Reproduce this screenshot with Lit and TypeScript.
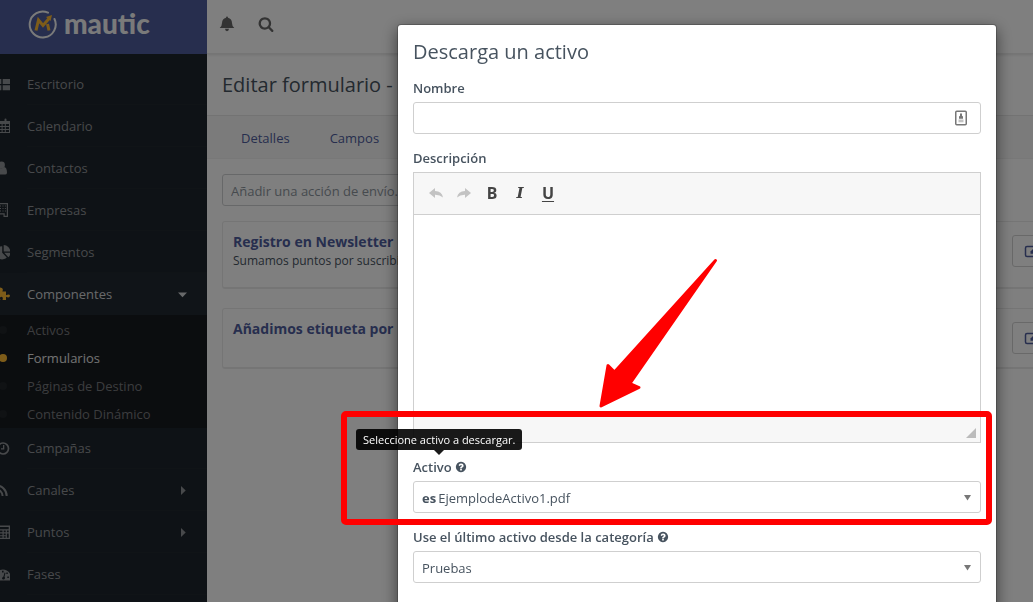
import { LitElement, html, css, svg, nothing } from "lit";
import { customElement } from "lit/decorators.js";
import { classMap } from "lit/directives/class-map.js";

const icons: Record<string, unknown> = {
  grid: svg`<path d="M1 3h6.300v5H1zM8.700 3H16v5H8.700zM1 9.300h6.300v5H1zM8.700 9.300H16v5H8.700z"/>`,
  calendar: svg`<path fill-rule="evenodd" d="M1 3h2.500V1.500q0-1 1-1t1 1V3h5V1.500q0-1 1-1t1 1V3H16v12H1zM2 6v2h2.400V6zm3.400 0v2h2.200V6zm3.200 0v2h2.200V6zm3.200 0v2H15V6zM2 9v2h2.400V9zm3.400 0v2h2.200V9zm3.200 0v2h2.200V9zm3.200 0v2H15V9zM2 12v2h2.400v-2zm3.400 0v2h2.200v-2zm3.200 0v2h2.200v-2zm3.200 0v2H15v-2z"/>`,
  user: svg`<circle cx="7.500" cy="5" r="3.400"/><path d="M1 13q0-6 3.500-6Q7.500 9.500 10 7 13 7 13 13q-.3 1.500-2 1.500H3Q1.300 14.500 1 13z"/>`,
  building: svg`<path fill-rule="evenodd" d="M1 1h13v14H9.500v-2.500h-4V15H1zm1.200 1.200v11.600h2.100v-2.500h6.400v2.500h2.100V2.200z"/><path d="M3.500 3.500h1v1h-1zm2.500 0h1v1H6zm2.500 0h1v1h-1zm2.400 0h1v1h-1zM3.500 6h1v1h-1zM6 6h1v1H6zm2.500 0h1v1h-1zm2.400 0h1v1h-1zM3.500 8.500h1v1h-1zm2.500 0h1v1H6zm2.500 0h1v1h-1zm2.400 0h1v1h-1z"/>`,
  pie: svg`<path d="M8.200 2.200v6.600l4.600 4.600A6.600 6.600 0 1 1 8.200 2.200z"/><path d="M9.700 1a6.500 6.500 0 0 1 6.500 6.500H9.700zM10.200 8.800h6.200a6.500 6.500 0 0 1-2 4.500z"/>`,
  puzzle: svg`<path d="M1 6h4.500Q4 2 6.500 1.500 10 2 8.300 5.500H12v3.800q3.500-2 4 .5-.5 2.700-4 1V14H8.500q1-3-1-3.200Q5 11 6.500 14H1z"/>`,
  clock: svg`<circle cx="9" cy="8.500" r="5.500" fill="none" stroke="currentColor" stroke-width="1.700"/><path d="M9 5h1.300v4.500H7V8.300h2z"/>`,
  rss: svg`<circle cx="4" cy="12.500" r="1.800"/><path fill="none" stroke="currentColor" stroke-width="2" d="M2 3.500A10.500 10.500 0 0 1 12.700 14M2 7.500A6.500 6.500 0 0 1 8.600 14"/>`,
  calculator: svg`<path fill-rule="evenodd" d="M1 1.500h15v13.500H1zM2.300 3v2.200h12.400V3zm0 3.500v1.800h2.500V6.500zm3.700 0v1.800h2.500V6.500zm3.700 0v1.800h2V6.500zm3.200 0v1.800h1.800V6.500zM2.300 9.500v1.700h2.500V9.500zm3.700 0v1.700h2.500V9.500zm3.700 0v1.700h2V9.500zm3.200 0v4.200h1.800V9.500zM2.300 12.300v1.500h2.500v-1.500zm3.700 0v1.500h2.500v-1.500zm3.700 0v1.500h2v-1.500z"/>`,
  gauge: svg`<path fill-rule="evenodd" d="M1.500 14.500a8 8 0 1 1 14.800 0zM8 12.800a1.700 1.700 0 0 0 2.900-.3q.3-1-.4-1.700l1-3.900-1-.3-1 3.900q-1.300.3-1.500 2.300zM8 4.800v1.600h1.600V4.800zM4.500 6.500V8H6V6.500zm-1.400 4v1.600h1.600v-1.600zM12.300 6.500V8h1.500V6.500zm1 4v1.600h1.600v-1.600z"/>`,
  bell: svg`<path d="M8 .5q1 0 1 1.200 3.800.8 4 5.300.1 3.500 2.300 5H.7Q2.900 10.500 3 7q.2-4.500 4-5.300Q7 .5 8 .5zM6 12.800h4q-.2 2.400-2 2.400t-2-2.400z"/>`,
  search: svg`<path transform="scale(.00893)" d="M1216 832q0-185-131.500-316.500t-316.500-131.500-316.500 131.500-131.500 316.500 131.500 316.500 316.500 131.500 316.500-131.500 131.500-316.500zm512 832q0 52-38 90t-90 38q-54 0-90-38l-343-342q-179 124-399 124-143 0-273.500-55.500t-225-150-150-225-55.500-273.500 55.500-273.500 150-225 225-150 273.500-55.500 273.500 55.500 225 150 150 225 55.500 273.500q0 220-124 399l343 343q37 37 37 90z"/>`,
  help: svg`<path transform="scale(.00893)" d="M1024 1376v-192q0-14-9-23t-23-9h-192q-14 0-23 9t-9 23v192q0 14 9 23t23 9h192q14 0 23-9t9-23zm256-672q0-88-55.500-163t-138.500-116-170-41q-243 0-371 213-15 24 8 42l132 100q7 6 19 6 16 0 25-12 53-68 86-92 34-24 86-24 48 0 85.500 26t37.500 59q0 38-20 61t-68 45q-63 28-115.500 86.500t-52.500 125.500v36q0 14 9 23t23 9h192q14 0 23-9t9-23q0-19 21.500-49.500t54.500-49.500q32-18 49-28.500t46-35 44.500-48 28-60.500 12.500-81zm384 192q0 209-103 385.500t-279.500 279.500-385.500 103-385.500-103-279.500-279.500-103-385.500 103-385.500 279.500-279.500 385.500-103 385.500 103 279.500 279.500 103 385.500z"/>`,
  edit: svg`<path fill="none" stroke="currentColor" stroke-width="1.500" d="M12.500 9.500V12q0 1.500-1.500 1.500H3Q1.500 13.500 1.500 12V5Q1.500 3.500 3 3.500h8"/><path d="M12.500 2.500l2.200 2.200-6 6H6.500V8.500z"/>`,
  undo: svg`<path d="M1 8l6-5v3q7 .3 8 6.500Q12 9.700 7 9.800V13z"/>`,
  redo: svg`<path d="M15 8L9 3v3q-7 .3-8 6.500 3-2.800 8-2.700V13z"/>`,
  down: svg`<path d="M3 6.500h9L7.500 11.300z"/>`,
  right: svg`<path d="M6 4l4.700 4.500L6 13z"/>`,
  contact: svg`<rect x="2.750" y="1.250" width="10.500" height="13.500" rx="1" fill="#fff" stroke="currentColor" stroke-width="1.500"/><path d="M7 3.500h2v2.200l1 .8v2.300H6V6.500l1-.8z"/><path opacity=".45" d="M5.500 9.500h5v2.800h-5z"/>`,
};

const icon = (name: string, cls = "") =>
  html`<svg class="icon ${cls}" viewBox="0 0 16 16" aria-hidden="true">${icons[name]}</svg>`;

interface NavItem {
  label: string;
  icon: string;
  arrow?: string;
  active?: boolean;
  children?: string[];
}

const nav: NavItem[] = [
  { label: "Escritorio", icon: "grid" },
  { label: "Calendario", icon: "calendar" },
  { label: "Contactos", icon: "user" },
  { label: "Empresas", icon: "building" },
  { label: "Segmentos", icon: "pie" },
  {
    label: "Componentes",
    icon: "puzzle",
    arrow: "down",
    active: true,
    children: ["Activos", "Formularios", "Páginas de Destino", "Contenido Dinámico"],
  },
  { label: "Campañas", icon: "clock" },
  { label: "Canales", icon: "rss", arrow: "right" },
  { label: "Puntos", icon: "calculator", arrow: "right" },
  { label: "Fases", icon: "gauge" },
];

const base = css`
  * { box-sizing: border-box; }
  a { color: inherit; text-decoration: none; }
  button, input, select, textarea { font: inherit; color: inherit; margin: 0; }
  .icon { width: 16px; height: 16px; fill: currentColor; flex: none; display: block; }
`;

@customElement("side-bar")
class SideBar extends LitElement {
  static styles = [
    base,
    css`
      :host { display: block; width: 207px; flex: none; background: #1d252c; color: #8f9296; }
      .brand { display: flex; align-items: center; gap: 7px; height: 54px; padding: 0 0 6px 28px; background: #4e5d9d; color: #f5f5f5; }
      .brand svg { width: 29px; height: 29px; flex: none; }
      .word { font: 900 28px/40px Lato, sans-serif; padding-bottom: 2px; }
      ul { list-style: none; margin: 0; padding: 0; }
      .menu { padding-top: 9px; }
      .link { display: flex; align-items: center; height: 42px; padding-right: 16px; }
      .link .lead { margin-left: -6px; }
      .text { flex: 1; display: flex; align-items: center; height: 42px; margin-left: 17px; }
      .rule { border-bottom: 1px solid #20282f; margin-left: 27px; margin-top: -1px; }
      .active { background: #202931; color: #d0d2d4; }
      .active .lead { color: #fdb933; }
      .sub { background: #171a1e; padding-top: 1px; margin-bottom: -1px; }
      .sub a { display: flex; align-items: center; height: 28px; color: #77797d; }
      .sub a::before { content: ""; width: 8px; height: 8px; border-radius: 4px; background: #202429; margin-right: 20px; margin-left: -1px; }
      .sub .current { color: #e4e4e4; }
      .sub .current::before { background: #fdb933; }
    `,
  ];

  render() {
    return html`
      <a class="brand" href="#" aria-label="mautic">
        <svg viewBox="0 0 29 29" fill="none">
          <path d="M20 2.600A13 13 0 1 0 26.500 9" stroke="#f5f5f5" stroke-width="2" stroke-linecap="round" />
          <path d="M8 20.500l2.500-10.500 4.500 5.500 6.500-7.500" stroke="#fdb933" stroke-width="3" />
          <path d="M18 7l6-2-1.500 6z" fill="#fdb933" />
          <path d="M19.500 14l1.500 6.500" stroke="#fdb933" stroke-width="3" />
        </svg>
        <span class="word">mautic</span>
      </a>
      <nav>
        <ul class="menu">
          ${nav.map(
            (item) => html`<li>
              <a class=${classMap({ link: true, active: !!item.active })} href="#">
                ${icon(item.icon, "lead")}<span class="text">${item.label}</span>
                ${item.arrow ? icon(item.arrow) : nothing}
              </a>
              ${item.children
                ? html`<ul class="sub">
                    ${item.children.map(
                      (c) => html`<li><a href="#" class=${classMap({ current: c === "Formularios" })}>${c}</a></li>`,
                    )}
                  </ul>`
                : html`<div class="rule"></div>`}
            </li>`,
          )}
        </ul>
      </nav>
    `;
  }
}

@customElement("form-page")
class FormPage extends LitElement {
  static styles = [
    base,
    css`
      :host { display: block; flex: 1; min-width: 0; overflow: hidden; background: #fff; color: #47535f; }
      header { display: flex; align-items: center; gap: 23px; height: 54px; padding: 0 12px 6px; border-bottom: 1px solid #ebebeb; box-shadow: 0 1px 3px rgba(0, 0, 0, 0.12); color: #676767; }
      header button { border: 0; padding: 0; background: none; }
      h1 { margin: 0; padding: 17px 15px 16px; font: 400 20px/28px "Open Sans", sans-serif; white-space: nowrap; }
      .tabs { display: flex; height: 44px; padding-left: 14px; background: #f7f7f7; border-top: 1px solid #e6e6e6; border-bottom: 1px solid #f0f0f0; color: #4e5d9d; }
      .tabs a { display: flex; align-items: center; padding: 2px 20px 0; }
      .body { display: flex; flex-direction: column; padding: 15px 0 0 15px; margin-right: -40px; }
      .pick { appearance: none; width: 280px; height: 32px; padding: 2px 8px 0; margin-bottom: 15px; border: 1px solid #cfd1d3; border-radius: 3px; background: #fff; color: #8d959d; }
      .card { display: flex; justify-content: space-between; align-items: flex-start; padding: 10px 0 0 10px; border: 1px solid #ebebeb; border-bottom-width: 2px; border-radius: 3px; margin-bottom: 19px; }
      .large { height: 68px; }
      .small { height: 61px; }
      .card h2 { margin: 0; font: 700 14px/19px "Open Sans", sans-serif; color: #4e5d9d; }
      .card p { margin: 0; font-size: 12px; line-height: 19px; }
      .card button { display: flex; align-items: center; margin-top: 3px; padding: 0 11px; width: 60px; height: 32px; border: 1px solid #d3d3d3; border-radius: 3px; background: #fff; color: #4e5d9d; }
    `,
  ];

  private card(title: string, size: string, text?: string) {
    return html`<article class="card ${size}">
      <div>
        <h2>${title}</h2>
        ${text ? html`<p>${text}</p>` : nothing}
      </div>
      <button type="button" aria-label="Editar">${icon("edit")}</button>
    </article>`;
  }

  render() {
    return html`
      <header>
        <button type="button" aria-label="Notificaciones">${icon("bell")}</button>
        <button type="button" aria-label="Buscar">${icon("search")}</button>
      </header>
      <h1>Editar formulario -</h1>
      <nav class="tabs"><a href="#">Detalles</a><a href="#">Campos</a></nav>
      <div class="body">
        <select class="pick" aria-label="Acción de envío">
          <option>Añadir una acción de envío...</option>
        </select>
        ${this.card("Registro en Newsletter", "large", "Sumamos puntos por suscribirse")}
        ${this.card("Añadimos etiqueta por", "small")}
      </div>
    `;
  }
}

@customElement("asset-dialog")
class AssetDialog extends LitElement {
  static styles = [
    base,
    css`
      :host { display: block; position: relative; width: 600px; min-height: 100%; padding: 0 15px 20px; border: 1px solid rgba(0, 0, 0, 0.2); border-radius: 4px; background: #fff; background-clip: padding-box; box-shadow: 0 5px 15px rgba(0, 0, 0, 0.5); color: #47535f; }
      h2 { margin: 0; padding: 13px 0; font: 400 20px/28px "Open Sans", sans-serif; }
      .field { margin-bottom: 15px; }
      .label { display: flex; align-items: center; gap: 3px; height: 18px; margin-bottom: 5px; font-weight: 600; }
      .label .icon { width: 12px; height: 12px; }
      .box { display: flex; align-items: center; height: 32px; border: 1px solid #cfcfcf; border-radius: 3px; background: #fff; padding: 0 8px; }
      .box input, .box select { flex: 1; min-width: 0; border: 0; padding: 0; background: none; outline: 0; appearance: none; }
      .box .icon { color: #777; }
      .entry .icon { margin-right: 3px; }
      .choice { padding-top: 2px; }
      .box .caret { width: 9px; height: 9px; }
      .box b { margin-right: 2px; }
      .editor { border: 1px solid #cfcfcf; }
      .tools { display: flex; align-items: center; gap: 12px; height: 42px; padding: 0 14px 2px; background: #f7f7f7; border-bottom: 1px solid #cfcfcf; color: #444; }
      .tools button { width: 16px; padding: 0; border: 0; background: none; font: 700 16px/20px "Noto Sans", sans-serif; }
      .tools button:disabled { color: #c3c3c3; }
      .tools .italic { font-style: italic; font-family: "DejaVu Serif", serif; font-size: 15px; }
      .tools .under { text-decoration: underline; text-underline-offset: 2px; }
      textarea { display: block; width: 100%; height: 201px; border: 0; outline: 0; resize: none; padding: 12px; }
      .foot { display: flex; justify-content: flex-end; align-items: flex-end; height: 26px; padding: 4px; background: #f7f7f7; }
      .grip { width: 10px; height: 10px; fill: #bbb; }
      .hinted { position: relative; }
      .tip { position: absolute; left: -57px; bottom: 63px; padding: 3px 7px; width: max-content; border-radius: 3px; background: rgba(0, 0, 0, 0.9); color: #fff; font-size: 11px; line-height: 15px; font-weight: 400; }
      .tip::after { content: ""; position: absolute; top: 100%; left: 50%; margin-left: -5px; border: 5px solid transparent; border-bottom-width: 0; border-top-color: rgba(0, 0, 0, 0.9); }
      .frame { position: absolute; left: -57px; right: 4px; top: 386px; height: 114px; border: 6px solid #f00; border-radius: 5px; pointer-events: none; }
      .pointer { position: absolute; left: 201px; top: 233px; width: 119px; height: 150px; pointer-events: none; }
    `,
  ];

  render() {
    return html`
      <h2>Descarga un activo</h2>
      <div class="field">
        <label class="label" for="name">Nombre</label>
        <div class="box entry"><input id="name" type="text" />${icon("contact")}</div>
      </div>
      <div class="field">
        <label class="label" for="desc">Descripción</label>
        <div class="editor">
          <div class="tools">
            <button type="button" disabled aria-label="Deshacer">${icon("undo")}</button>
            <button type="button" disabled aria-label="Rehacer">${icon("redo")}</button>
            <button type="button">B</button>
            <button type="button" class="italic">I</button>
            <button type="button" class="under">U</button>
          </div>
          <textarea id="desc"></textarea>
          <div class="foot"><svg class="grip" viewBox="0 0 10 10"><path d="M10 0v10H0z" /></svg></div>
        </div>
      </div>
      <div class="field hinted">
        <label class="label" for="asset">Activo ${icon("help")}</label>
        <div class="box choice">
          <b>es</b>
          <select id="asset"><option>EjemplodeActivo1.pdf</option></select>
          ${this.caret()}
        </div>
        <div class="tip" role="tooltip">Seleccione activo a descargar.</div>
      </div>
      <div class="field">
        <label class="label" for="category">Use el último activo desde la categoría ${icon("help")}</label>
        <div class="box choice">
          <select id="category"><option>Pruebas</option></select>
          ${this.caret()}
        </div>
      </div>
      <div class="frame"></div>
      <svg class="pointer" viewBox="0 0 119 150" fill="#f00" stroke="#f00" stroke-width="3" stroke-linejoin="round">
        <path d="M116.500 2.500L15.500 114 9 107.500 2 148 40 129.500 31 125.500z" />
      </svg>
    `;
  }

  private caret() {
    return html`<svg class="icon caret" viewBox="0 0 9 9" aria-hidden="true"><path d="M1 1h7L4.500 6.500z" /></svg>`;
  }
}

@customElement("app-root")
class AppRoot extends LitElement {
  static styles = [
    base,
    css`
      :host { display: block; font: 400 13px/18px "Open Sans", sans-serif; }
      .page { display: flex; height: 100vh; overflow: hidden; }
      .shade { position: fixed; inset: 0; display: flex; justify-content: flex-end; align-items: flex-start; padding: 24px 36px 0 0; background: rgba(0, 0, 0, 0.5); overflow: hidden; }
    `,
  ];

  render() {
    return html`
      <div class="page"><side-bar></side-bar><form-page></form-page></div>
      <div class="shade" role="dialog" aria-label="Descarga un activo"><asset-dialog></asset-dialog></div>
    `;
  }
}
